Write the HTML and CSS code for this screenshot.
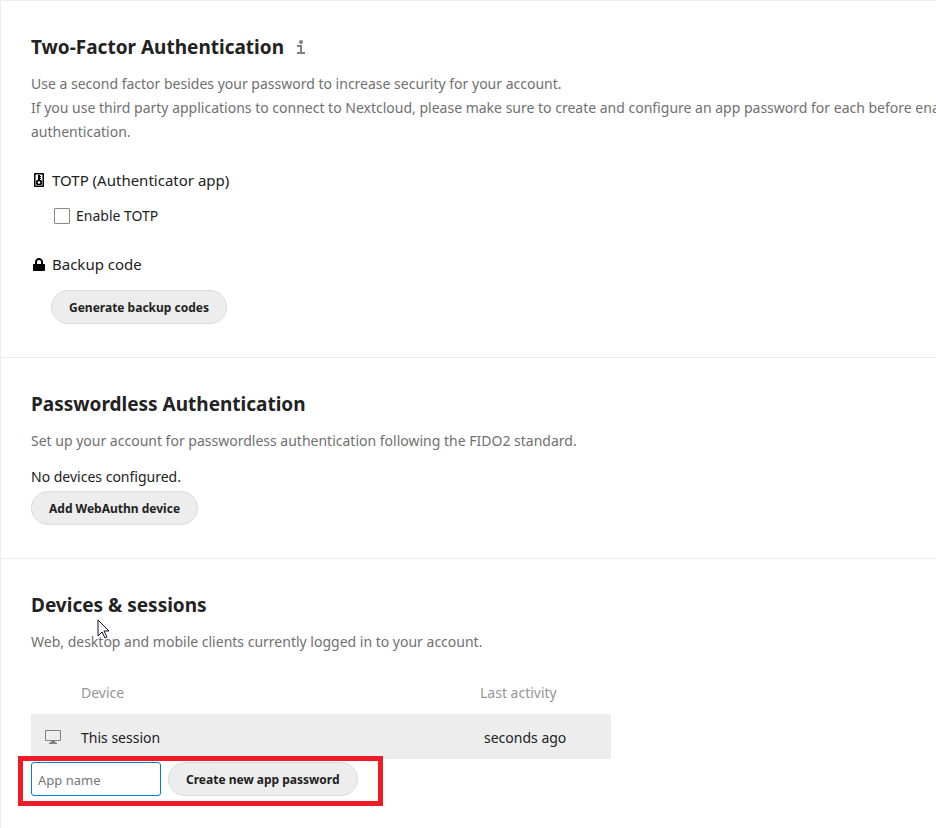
FILE: index.html
```html
<!DOCTYPE html>
<html lang="en">
<head>
<meta charset="utf-8">
<meta name="viewport" content="width=device-width, initial-scale=1">
<title>Security settings</title>
<link rel="stylesheet" href="styles.css">
</head>
<body>
<main class="settings">
  <section class="section">
    <h2 class="section-title">Two-Factor Authentication
      <a class="info" href="#" aria-label="More information"><svg width="10" height="14" viewBox="0 0 10 14" aria-hidden="true"><circle cx="5" cy="2" r="2"/><path d="M1 5h5v7h3v2H1v-2h3V7H1z"/></svg></a>
    </h2>
    <p class="hint hint-wide">Use a second factor besides your password to increase security for your account.<br>If you use third party applications to connect to Nextcloud, please make sure to create and configure an app password for each before enabling second factor<br>authentication.</p>
    <ul class="providers">
      <li class="provider">
        <h3 class="provider-title">
          <svg class="provider-icon" width="16" height="16" viewBox="0 0 16 16" aria-hidden="true"><rect x="3" y="1" width="10" height="14" rx="1"/><rect class="cut" x="4.500" y="2.500" width="7" height="11"/><path d="M7 3h2v1h1v1H9v1h1v1H9v1h1l1 1v3l-1 1H6l-1-1V9l1-1h1z"/><circle class="cut" cx="8" cy="10.500" r="1.300"/></svg>
          TOTP (Authenticator app)
        </h3>
        <label class="check"><input type="checkbox"> Enable TOTP</label>
      </li>
      <li class="provider">
        <h3 class="provider-title">
          <svg class="provider-icon" width="16" height="16" viewBox="0 0 16 16" aria-hidden="true"><path fill-rule="evenodd" d="M8 2C5.800 2 4 3.800 4 6v2H3c-.600 0-1 .400-1 1v5c0 .600.400 1 1 1h10c.600 0 1-.400 1-1V9c0-.600-.400-1-1-1h-1V6c0-2.200-1.800-4-4-4zm0 2c1.200 0 2 .900 2 2v2H6V6c0-1.100.800-2 2-2z"/></svg>
          Backup code
        </h3>
        <button class="button button-indent" type="button">Generate backup codes</button>
      </li>
    </ul>
  </section>

  <section class="section">
    <h2 class="section-title">Passwordless Authentication</h2>
    <p class="hint">Set up your account for passwordless authentication following the FIDO2 standard.</p>
    <p class="status">No devices configured.</p>
    <button class="button" type="button">Add WebAuthn device</button>
  </section>

  <section class="section">
    <h2 class="section-title">Devices &amp; sessions</h2>
    <p class="hint">Web, desktop and mobile clients currently logged in to your account.</p>
    <table class="sessions">
      <thead>
        <tr><th class="col-icon"></th><th class="col-device">Device</th><th class="col-activity">Last activity</th></tr>
      </thead>
      <tbody>
        <tr>
          <td class="col-icon"><svg width="16" height="14" viewBox="0 0 16 14" aria-hidden="true"><path fill-rule="evenodd" d="M1 0h14a1 1 0 0 1 1 1v9a1 1 0 0 1-1 1H1a1 1 0 0 1-1-1V1a1 1 0 0 1 1-1zm0 1v9h14V1z"/><path d="M6 11h4v1l2 1v1H4v-1l2-1z"/></svg></td>
          <td>This session</td>
          <td class="activity">seconds ago</td>
        </tr>
      </tbody>
    </table>
    <form class="new-token">
      <input class="text-input" type="text" placeholder="App name" aria-label="App name">
      <button class="button" type="button">Create new app password</button>
    </form>
    <svg class="pointer" width="13" height="20" viewBox="0 0 13 20" aria-hidden="true"><path d="M1 1v16l4-4 3 6 2-1-3-6h5z"/></svg>
  </section>
</main>
</body>
</html>
```
FILE: styles.css
```css
* { box-sizing: border-box; }

body {
  margin: 0;
  background: #fff;
  color: #222;
  font-family: "Noto Sans", "Open Sans", sans-serif;
  font-size: 14px;
  line-height: 24px;
}

.settings {
  min-height: 100vh;
  border-left: 1px solid #ededed;
  overflow: hidden;
}

.section {
  position: relative;
  padding: 30px 30px 33px;
  border-top: 1px solid #ededed;
}

.section-title {
  display: flex;
  align-items: center;
  gap: 12px;
  margin: 0 0 9px;
  font-size: 19px;
  font-weight: 700;
  line-height: 32px;
}

.info { display: flex; }
.info svg { fill: #808080; }

.hint {
  margin: 0;
  color: #707070;
}

.hint-wide { white-space: nowrap; }

.status { margin: 12px 0 2px; }

.providers {
  margin: 0;
  padding: 0;
  list-style: none;
}

.provider { margin-top: 24px; }

.provider-title {
  display: flex;
  align-items: center;
  gap: 5px;
  margin: 0 0 12px;
  font-size: 15px;
  font-weight: 400;
}

.provider-icon { fill: #000; }
.provider-icon .cut { fill: #fff; }

.check {
  display: flex;
  align-items: center;
  gap: 6px;
  width: fit-content;
  margin-left: 23px;
}

.check input {
  appearance: none;
  width: 16px;
  height: 16px;
  margin: 0;
  border: 1px solid #878787;
  border-radius: 1px;
  background: #fff;
}

.button {
  display: block;
  height: 34px;
  padding: 2px 17px 0;
  border: 1px solid #dbdbdb;
  border-radius: 17px;
  background: #ededed;
  color: #222;
  font: inherit;
  font-size: 12px;
  font-weight: 700;
}

.button-indent { margin: 14px 0 0 20px; }

.sessions {
  width: 100%;
  max-width: 580px;
  margin-top: 18px;
  border-collapse: collapse;
  table-layout: fixed;
}

.sessions th,
.sessions td {
  padding: 0;
  text-align: left;
  font-weight: 400;
}

.sessions th {
  height: 42px;
  color: #969696;
}

.sessions td {
  height: 45px;
  padding-top: 2px;
  background: #ededed;
}

.sessions .col-icon { width: 50px; }
.sessions td.col-icon { padding: 0 0 0 14px; }
.sessions .col-icon svg { display: block; fill: #808080; }
.sessions .col-activity { width: 131px; }
.sessions .activity { padding-left: 4px; }

.new-token {
  position: relative;
  display: flex;
  gap: 7px;
  width: fit-content;
  margin-top: 3px;
}

.new-token::after {
  content: "";
  position: absolute;
  inset: -6px -25px -10px -13px;
  border: 5px solid #ed1c24;
  pointer-events: none;
}

.text-input {
  width: 130px;
  height: 34px;
  padding: 2px 6px 0;
  border: 1px solid #0082c9;
  border-radius: 3px;
  font: inherit;
  font-size: 13px;
}

.text-input::placeholder { color: #767676; }

.pointer {
  position: absolute;
  top: 60px;
  left: 96px;
  fill: #fff;
  stroke: #101020;
}
```
